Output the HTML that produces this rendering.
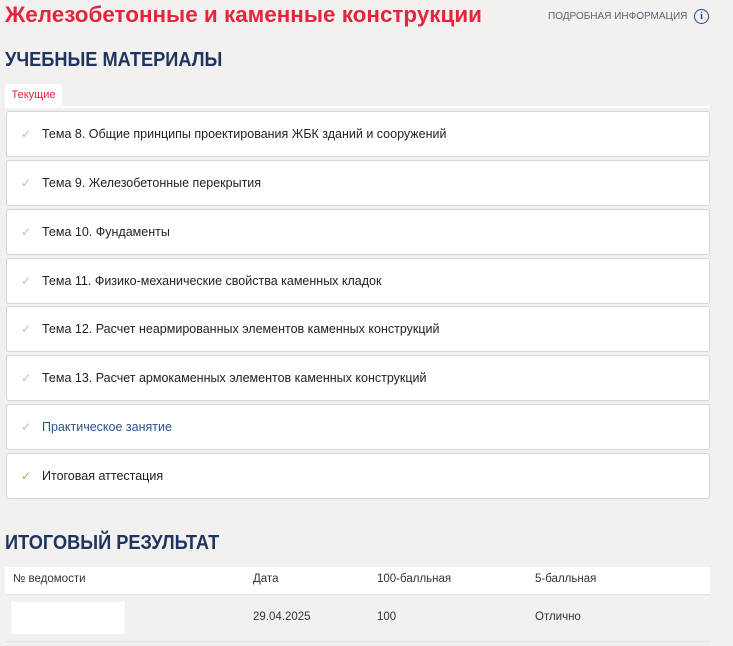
<!DOCTYPE html>
<html><head><meta charset="utf-8"><style>
body{margin:0;width:733px;height:646px;background:#f2f1f0;font-family:"Liberation Sans",sans-serif;position:relative;overflow:hidden}
.a{position:absolute;white-space:nowrap}
.t{left:5px;top:2px;font-size:22px;color:#e3253d;font-weight:bold;transform-origin:0 0;transform:scaleX(1.02)}
.info{left:548px;top:11px;font-size:10px;color:#5a6170}
.ic{left:694px;top:9px;width:13px;height:13px;border:1.5px solid #1f4a8a;border-radius:50%;font-size:10px;color:#1f4a8a;text-align:center;line-height:13px;font-weight:bold;font-family:"Liberation Serif",serif}
h2{margin:0;position:absolute;left:5px;font-size:20px;color:#1d3560;font-weight:bold;transform-origin:0 0;transform:scaleX(0.91);white-space:nowrap}
.tab{left:5px;top:84px;width:57px;height:22px;background:#fff;border-radius:3px 3px 0 0;font-size:11px;color:#e3253d;text-align:center;line-height:22px}
.line{left:5px;top:106px;width:705px;height:2px;background:#fff}
.c{position:absolute;left:6px;width:704px;height:46px;background:#fff;border:1px solid #d6d6d6;border-radius:3px;box-sizing:border-box;font-size:12.5px;color:#222;line-height:44px;padding-left:35px;white-space:nowrap}
.c:before{content:"✓";position:absolute;left:14px;top:0;color:#bbb;font-size:12px;font-family:"DejaVu Sans",sans-serif}
.c.b{color:#28528a}
.c.g:before{color:#8cc04a}
.th{left:5px;top:567px;width:705px;height:27px;background:#fff;border-bottom:1px solid #e4e4e4}
.row{left:5px;top:594px;width:705px;height:47px;border-bottom:1px solid #ddd}
.cell{font-size:11.5px;color:#333}
</style></head><body>
<div class="a t">Железобетонные и каменные конструкции</div>
<div class="a info">ПОДРОБНАЯ ИНФОРМАЦИЯ</div>
<div class="a ic">i</div>
<h2 style="top:49px">УЧЕБНЫЕ МАТЕРИАЛЫ</h2>
<div class="a tab">Текущие</div>
<div class="a line"></div>
<div class="c" style="top:111px">Тема 8. Общие принципы проектирования ЖБК зданий и сооружений</div>
<div class="c" style="top:160px">Тема 9. Железобетонные перекрытия</div>
<div class="c" style="top:209px">Тема 10. Фундаменты</div>
<div class="c" style="top:258px">Тема 11. Физико-механические свойства каменных кладок</div>
<div class="c" style="top:306px">Тема 12. Расчет неармированных элементов каменных конструкций</div>
<div class="c" style="top:355px">Тема 13. Расчет армокаменных элементов каменных конструкций</div>
<div class="c b" style="top:404px">Практическое занятие</div>
<div class="c g" style="top:453px">Итоговая аттестация</div>
<h2 style="top:532px">ИТОГОВЫЙ РЕЗУЛЬТАТ</h2>
<div class="a th"></div>
<div class="a row"></div>
<div class="a cell" style="left:13px;top:573px">№ ведомости</div>
<div class="a cell" style="left:253px;top:573px">Дата</div>
<div class="a cell" style="left:377px;top:573px">100-балльная</div>
<div class="a cell" style="left:535px;top:573px">5-балльная</div>
<div class="a" style="left:11px;top:602px;width:114px;height:32px;background:#fff;border-radius:2px"></div>
<div class="a cell" style="left:253px;top:611px">29.04.2025</div>
<div class="a cell" style="left:377px;top:611px">100</div>
<div class="a cell" style="left:535px;top:611px">Отлично</div>
</body></html>
